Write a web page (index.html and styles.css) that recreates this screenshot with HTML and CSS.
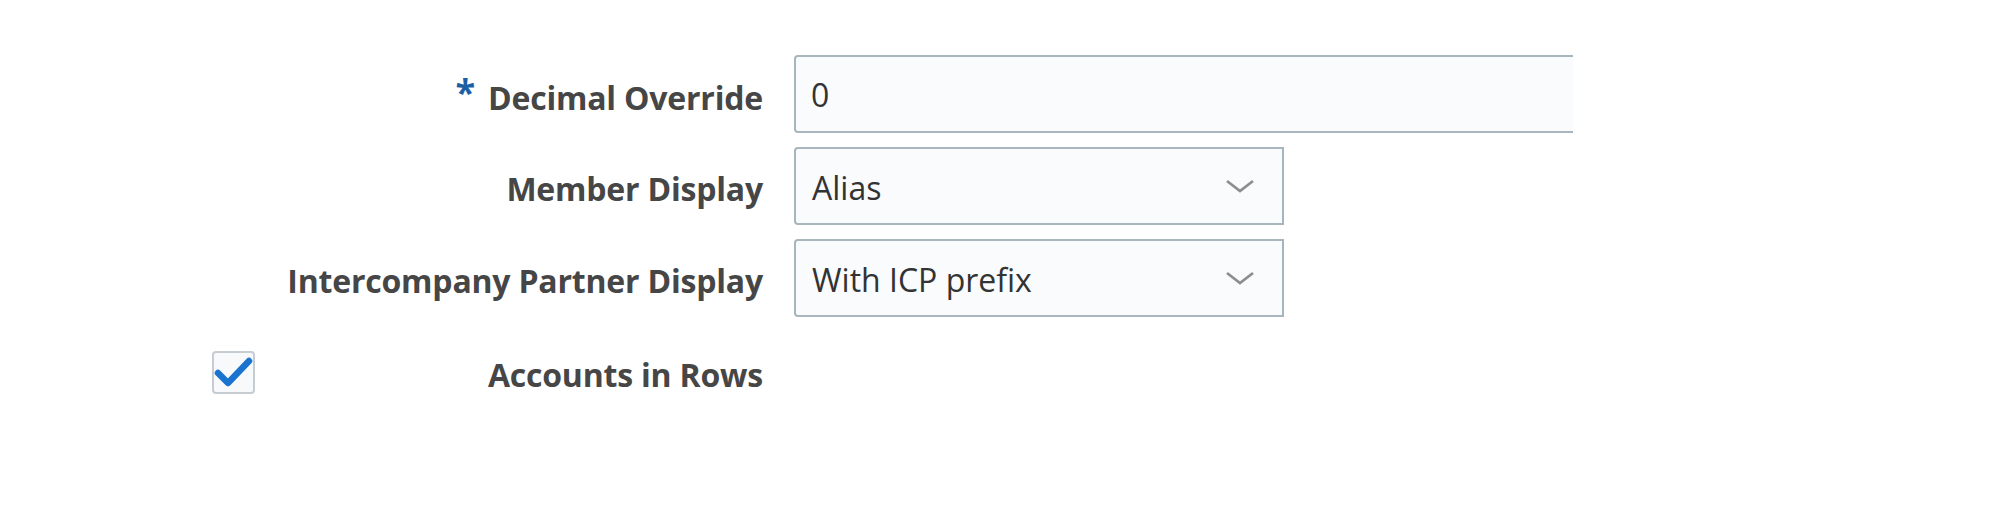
FILE: index.html
```html
<!DOCTYPE html>
<html lang="en">
<head>
<meta charset="utf-8">
<title>Settings</title>
<link rel="stylesheet" href="styles.css">
</head>
<body>
<form class="form">
  <div class="label-cell"><span class="label"><span class="req">*</span>Decimal Override</span></div>
  <div class="field-cell clip">
    <div class="input">0</div>
  </div>

  <div class="label-cell"><span class="label">Member Display</span></div>
  <div class="field-cell">
    <div class="select">
      <span class="value">Alias</span>
      <svg class="chev" viewBox="0 0 30 16" width="30" height="16"><polyline points="2,3 15,13 28,3" fill="none" stroke="#8e8e8e" stroke-width="2.8"/></svg>
    </div>
  </div>

  <div class="label-cell"><span class="label">Intercompany Partner Display</span></div>
  <div class="field-cell">
    <div class="select">
      <span class="value">With ICP prefix</span>
      <svg class="chev" viewBox="0 0 30 16" width="30" height="16"><polyline points="2,3 15,13 28,3" fill="none" stroke="#8e8e8e" stroke-width="2.8"/></svg>
    </div>
  </div>

  <div class="label-cell check-row">
    <span class="checkbox">
      <svg viewBox="0 0 43 43" width="43" height="43"><polyline points="6,22 16,32 37,10" fill="none" stroke="#1a73cf" stroke-width="6.5" stroke-linecap="round" stroke-linejoin="round"/></svg>
    </span>
    <span class="label">Accounts in Rows</span>
  </div>
  <div class="field-cell"></div>
</form>
</body>
</html>
```
FILE: styles.css
```css
html, body {
  margin: 0;
  padding: 0;
  background: #ffffff;
}

body {
  width: 2000px;
  height: 509px;
  overflow: hidden;
  font-family: "Open Sans", "Noto Sans", sans-serif;
}

.form {
  display: grid;
  grid-template-columns: 551px 779px;
  grid-auto-rows: 78px;
  column-gap: 31px;
  row-gap: 14px;
  padding: 55px 0 0 212px;
}

.label-cell {
  display: flex;
  align-items: center;
  justify-content: flex-end;
}

.label {
  font-weight: 700;
  font-size: 32px;
  color: #464646;
  white-space: nowrap;
  letter-spacing: -0.2px;
  position: relative;
  top: 2px;
}

.req {
  color: #1d5fa6;
  font-size: 36px;
  margin-right: 13px;
  position: relative;
  top: -5px;
}

.field-cell {
  display: flex;
  align-items: stretch;
}

.clip {
  overflow: hidden;
}

.input {
  box-sizing: border-box;
  width: 900px;
  flex: none;
  border: 2px solid #a6b5be;
  border-radius: 4px;
  background: #f9fbfd;
  color: #333333;
  font-size: 32px;
  display: flex;
  align-items: center;
  padding-left: 15px;
}

.select {
  box-sizing: border-box;
  width: 490px;
  border: 2px solid #a6b5be;
  border-radius: 4px 0 0 4px;
  background: #f9fbfd;
  display: flex;
  align-items: center;
  justify-content: space-between;
  padding: 0 27px 0 16px;
}

.value {
  color: #333333;
  font-size: 32px;
  position: relative;
  top: 1px;
}

.chev {
  filter: blur(0.5px);
}

.check-row {
  justify-content: space-between;
  padding-top: 5px;
}

.checkbox {
  box-sizing: border-box;
  width: 43px;
  height: 43px;
  border: 2px solid #c6cdd2;
  border-radius: 4px;
  background: #f7f9fb;
  display: flex;
}

.checkbox svg {
  margin: -2px;
  filter: blur(0.4px);
}
```
